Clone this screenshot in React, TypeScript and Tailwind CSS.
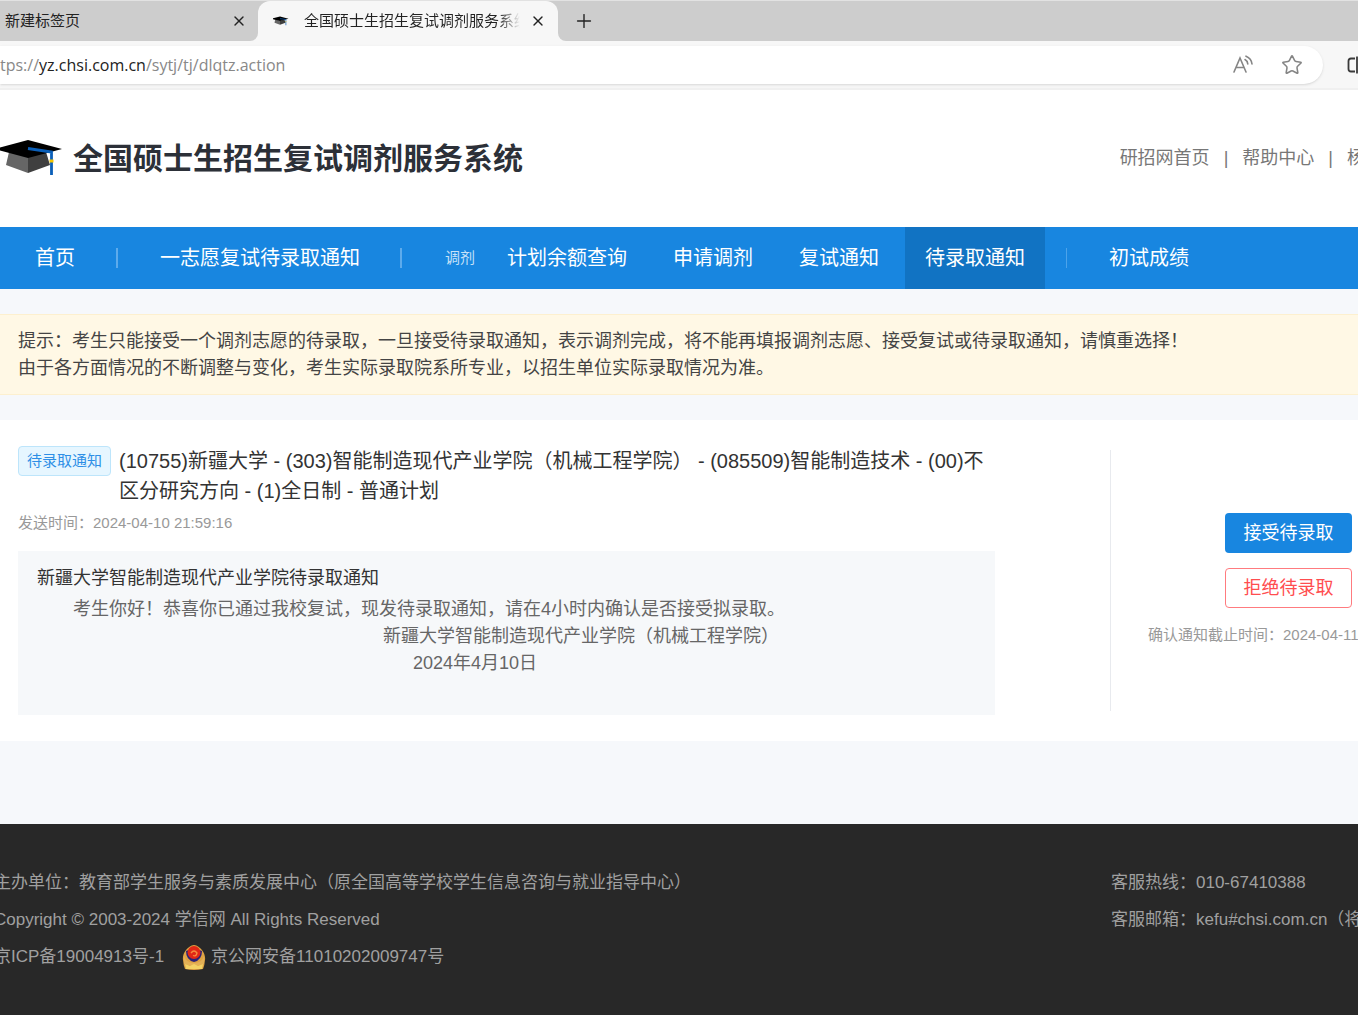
import * as React from "react";
import { Plus, Star, X } from "lucide-react";

type NavItem = { label: string; active?: boolean };

const ADJUST_ITEMS: NavItem[] = [
  { label: "计划余额查询" },
  { label: "申请调剂" },
  { label: "复试通知" },
  { label: "待录取通知", active: true },
];

function GraduationCap({ className }: { className?: string }) {
  return (
    <svg viewBox="0 0 64 36" className={className} aria-hidden="true">
      <path d="M9 12 L28 17 V33 L6 25 Z" fill="#666" />
      <path d="M28 17 L46 12 L50 25 L28 33 Z" fill="#3f3f3f" />
      <path d="M28 0 L62 9 L28 18 L-6 9 Z" fill="#000" />
      <path d="M28 8.5 L51.5 12 V35" fill="none" stroke="#0b5fb8" strokeWidth="2.8" />
      <rect x="49.5" y="19.5" width="4" height="3" fill="#f2c500" />
    </svg>
  );
}

function ReadAloudIcon() {
  return (
    <svg viewBox="0 0 22 20" className="h-5 w-[22px]" fill="none" stroke="#858585" strokeWidth="1.6" strokeLinecap="round" aria-hidden="true">
      <path d="M2 17 L8 3 L14 17 M4 12.5 H12" />
      <path d="M13 4.5 Q15.5 5.8 15.8 9" />
      <path d="M14 1.2 Q19.4 3.4 20 9" />
    </svg>
  );
}

function SplitScreenIcon() {
  return (
    <svg viewBox="0 0 20 20" className="size-5" fill="none" stroke="#3a3a3a" strokeWidth="1.8" aria-hidden="true">
      <path d="M8 3.5 H4 Q1.5 3.5 1.5 6 V14 Q1.5 16.5 4 16.5 H8" />
      <path d="M10 1.5 V18.5" />
      <path d="M12 3.5 H16 Q18.5 3.5 18.5 6 V14 Q18.5 16.5 16 16.5 H12" />
    </svg>
  );
}

function PoliceBadge() {
  return (
    <svg viewBox="0 0 24 26" className="h-[26px] w-6" aria-hidden="true">
      <path d="M12 1 C5 2 0 10 1 16 Q1.5 22 3 25 Q12 27 21 25 Q22.5 22 23 16 C24 10 19 2 12 1 Z" fill="#dfa243" />
      <path d="M4 7 Q12 3 20 7 Q20 16 12 18 Q4 16 4 7 Z" fill="#2b2377" />
      <circle cx="12" cy="8.5" r="6.5" fill="#e02716" />
      <path d="M9 9 Q12 5 15 9 Q14 13 11 11.5" fill="none" stroke="#f58b3c" strokeWidth="1.3" />
      <path d="M2 12 Q4 19 12 19 Q20 19 22 12 L22 20 Q12 24 2 20 Z" fill="#e3b056" />
      <path d="M3 20 L8 22 L12 20 L16 22 L21 20 L20 25 H4 Z" fill="#f3d265" />
    </svg>
  );
}

function BrowserChrome() {
  return (
    <div className="bg-[#f7f7f7] text-[15px] text-[#222]">
      <div className="flex h-[41px] items-stretch border-t border-[#e2e2e2] bg-[#f7f7f7]">
        <div className="flex w-[258px] items-center justify-between rounded-br-lg bg-[#cdcdcd] pr-[11px] pl-[5px]">
          <span>新建标签页</span>
          <button type="button" aria-label="关闭 新建标签页">
            <X className="size-4" strokeWidth={2} />
          </button>
        </div>
        <div className="bg-[#cdcdcd]">
          <div className="flex h-full w-[300px] items-center rounded-t-xl bg-[#f7f7f7] pr-3 pl-[15px]">
            <GraduationCap className="h-3 w-4 shrink-0" />
            <span className="ml-[15px] w-[216px] overflow-hidden bg-linear-to-r from-[#222] from-90% to-transparent bg-clip-text whitespace-nowrap text-transparent">
              全国硕士生招生复试调剂服务系统
            </span>
            <button type="button" aria-label="关闭当前标签页" className="ml-auto">
              <X className="size-4" strokeWidth={2} />
            </button>
          </div>
        </div>
        <div className="flex flex-1 items-center rounded-bl-lg bg-[#cdcdcd] pl-[15px]">
          <button type="button" aria-label="新建标签页">
            <Plus className="size-[22px]" strokeWidth={1.5} />
          </button>
        </div>
      </div>
      <div className="flex h-[49px] items-center border-b-2 border-[#f0f0f0]">
        <div className="flex h-[38px] flex-1 items-center rounded-r-full bg-white pr-5 shadow-sm">
          <p className="font-['Open_Sans',sans-serif] text-[16px] text-[#888]">
            tps://<span className="text-[#222]">yz.chsi.com.cn</span>/sytj/tj/dlqtz.action
          </p>
          <div className="ml-auto flex items-center gap-[27px]">
            <button type="button" aria-label="大声朗读">
              <ReadAloudIcon />
            </button>
            <button type="button" aria-label="收藏">
              <Star className="size-[22px] text-[#858585]" strokeWidth={1.7} />
            </button>
          </div>
        </div>
        <button type="button" aria-label="分屏" className="-mr-[9px] ml-6">
          <SplitScreenIcon />
        </button>
      </div>
    </div>
  );
}

function SiteHeader() {
  return (
    <header className="flex h-[137px] items-center justify-between bg-white">
      <div className="flex items-center">
        <GraduationCap className="mb-0.5 h-9 w-16" />
        <h1 className="ml-[9px] text-[30px] leading-10 font-bold text-[#2c3038]">全国硕士生招生复试调剂服务系统</h1>
      </div>
      <div className="-mr-[7px] flex items-center gap-[14px] text-[18px] text-[#777]">
        <a href="#">研招网首页</a>
        <span>|</span>
        <a href="#">帮助中心</a>
        <span>|</span>
        <a href="#">杨</a>
      </div>
    </header>
  );
}

function NavDivider() {
  return <span className="h-5 w-0.5 bg-[#5dabec]" />;
}

function MainNav() {
  return (
    <nav className="flex h-[62px] items-center bg-[#1886e0] pl-[35px] text-[20px] whitespace-nowrap text-white">
      <a href="#" className="mr-[41px]">首页</a>
      <NavDivider />
      <a href="#" className="mr-10 ml-[42px]">一志愿复试待录取通知</a>
      <NavDivider />
      <span className="mr-3 ml-[43px] text-[15px] text-[#c5e1f8]">调剂</span>
      <div className="flex gap-[6px]">
        {ADJUST_ITEMS.map((item) => (
          <a
            key={item.label}
            href="#"
            className={item.active ? "bg-[#1173c3] px-5 leading-[62px]" : "px-5 leading-[62px]"}
          >
            {item.label}
          </a>
        ))}
      </div>
      <span className="ml-[21px] h-5 w-px bg-[#4ca3ea]" />
      <a href="#" className="ml-[42px]">初试成绩</a>
    </nav>
  );
}

function NoticeCard() {
  return (
    <section className="flex bg-white">
      <div className="min-w-0 flex-1 pt-[26px] pr-[115px] pb-[26px] pl-[18px]">
        <div className="flex items-start gap-2">
          <span className="shrink-0 rounded border border-[#bde5fb] bg-[#e6f6ff] px-2 text-[15px] leading-7 text-[#2e8fe6]">
            待录取通知
          </span>
          <h2 className="text-[20px] leading-[30px] text-[#333]">
            (10755)新疆大学 - (303)智能制造现代产业学院（机械工程学院） - (085509)智能制造技术 - (00)不区分研究方向 - (1)全日制 - 普通计划
          </h2>
        </div>
        <p className="mt-1.5 text-[15px] leading-[22px] text-[#999]">发送时间：2024-04-10 21:59:16</p>
        <div className="mt-[17px] bg-[#f6f8fa] px-[19px] pt-[14px] pb-[38px] text-[18px] leading-[27px] text-[#666]">
          <h3 className="text-[#333]">新疆大学智能制造现代产业学院待录取通知</h3>
          <div className="mt-1">
            <p className="indent-[36px]">考生你好！恭喜你已通过我校复试，现发待录取通知，请在4小时内确认是否接受拟录取。</p>
            <p className="pl-[346px]">新疆大学智能制造现代产业学院（机械工程学院）</p>
            <p className="pl-[376px]">2024年4月10日</p>
          </div>
        </div>
      </div>
      <aside className="my-[30px] w-[248px] shrink-0 border-l border-[#e8eaee] pt-[63px]">
        <div className="flex flex-col items-end gap-[15px] pr-1.5 text-[18px]">
          <button type="button" className="h-10 w-[127px] rounded bg-[#1886e0] text-white">
            接受待录取
          </button>
          <button type="button" className="h-10 w-[127px] rounded border border-[#ff7b7f] text-[#ff4d4f]">
            拒绝待录取
          </button>
        </div>
        <p className="mt-4 overflow-hidden pl-[37px] text-[15px] leading-[22px] whitespace-nowrap text-[#999]">
          确认通知截止时间：2024-04-11
        </p>
      </aside>
    </section>
  );
}

function SiteFooter() {
  return (
    <footer className="flex justify-between overflow-hidden bg-[#282828] py-10 text-[17px] leading-[37px] whitespace-nowrap text-[#a0a0a0]">
      <div className="-ml-[6px]">
        <p>主办单位：教育部学生服务与素质发展中心（原全国高等学校学生信息咨询与就业指导中心）</p>
        <p>Copyright © 2003-2024 学信网 All Rights Reserved</p>
        <p className="flex items-center">
          <a href="#">京ICP备19004913号-1</a>
          <span className="mr-[5px] ml-[18px]">
            <PoliceBadge />
          </span>
          <a href="#">京公网安备11010202009747号</a>
        </p>
      </div>
      <div className="w-[247px] shrink-0">
        <p>客服热线：010-67410388</p>
        <p>客服邮箱：kefu#chsi.com.cn（将</p>
      </div>
    </footer>
  );
}

export default function App() {
  return (
    <div lang="zh-CN" className="min-h-screen overflow-hidden bg-white font-['Liberation_Sans','Noto_Sans_CJK_SC',sans-serif]">
      <BrowserChrome />
      <SiteHeader />
      <MainNav />
      <main className="bg-[#f6f8fb] pt-[25px] pb-[83px]">
        <div className="mb-[25px] border-y border-[#fdf0cf] bg-[#fff8e5] px-[18px] pt-[13px] pb-3 text-[18px] leading-[27px] text-[#444]">
          <p>提示：考生只能接受一个调剂志愿的待录取，一旦接受待录取通知，表示调剂完成，将不能再填报调剂志愿、接受复试或待录取通知，请慎重选择！</p>
          <p>由于各方面情况的不断调整与变化，考生实际录取院系所专业，以招生单位实际录取情况为准。</p>
        </div>
        <NoticeCard />
      </main>
      <SiteFooter />
    </div>
  );
}
